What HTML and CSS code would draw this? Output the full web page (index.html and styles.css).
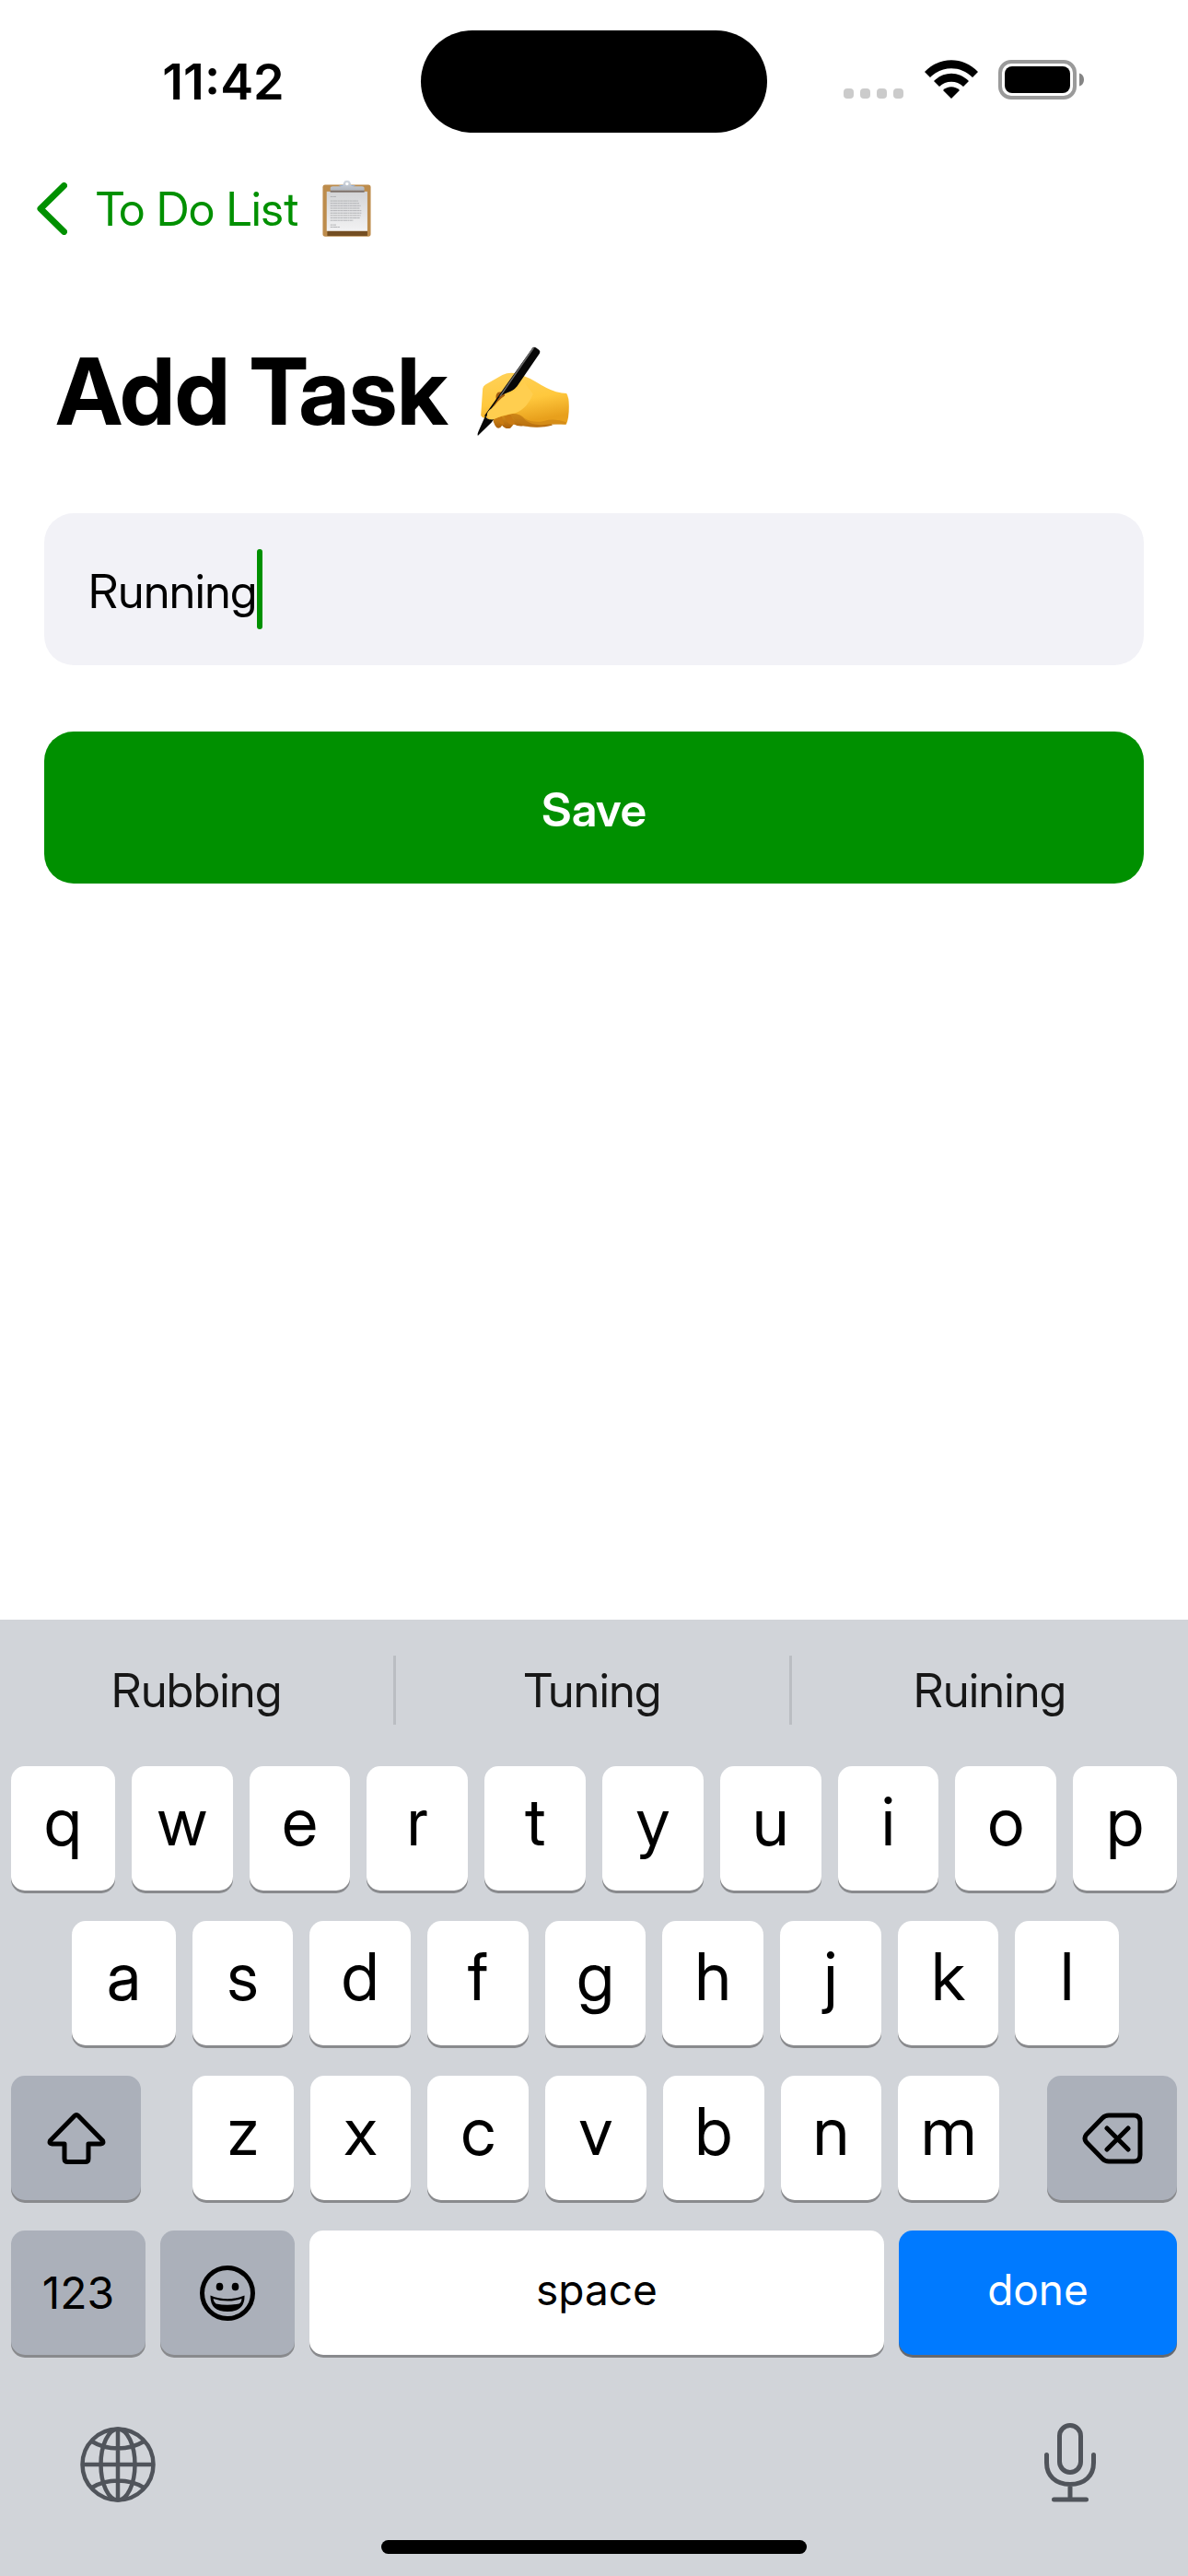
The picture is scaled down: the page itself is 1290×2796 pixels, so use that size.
FILE: index.html
```html
<!DOCTYPE html>
<html lang="en">
<head>
<meta charset="utf-8">
<meta name="viewport" content="width=device-width, initial-scale=1">
<title>Add Task</title>
<link rel="stylesheet" href="styles.css">
</head>
<body>
<div class="screen">
  <header class="status">
    <time class="status-time">11:42</time>
    <div class="island"></div>
    <div class="status-icons">
      <div class="signal"><i></i><i></i><i></i><i></i></div>
      <svg class="wifi" width="58" height="42" viewBox="0 0 58 42" aria-label="Wi-Fi">
        <path d="M0 13C16-4 42-4 58 13L52 19C39 6 19 6 6 19Z"/>
        <path d="M10 23C21 12 37 12 48 23L42 29C35 22 23 22 16 29Z"/>
        <path d="M20 33C25 28 33 28 38 33L29 42Z"/>
      </svg>
      <svg class="battery" width="94" height="43" viewBox="0 0 94 43" aria-label="Battery full">
        <rect x="2" y="2" width="81" height="39" rx="12" fill="none" stroke="#9a9a9a" stroke-width="4"/>
        <rect x="7" y="7" width="71" height="29" rx="8"/>
        <path d="M88 14.500C91.500 15.500 93 18.500 93 21.500S91.500 27.500 88 28.500Z" fill="#858585"/>
      </svg>
    </div>
  </header>

  <nav class="nav">
    <a class="back" href="#">
      <svg width="33" height="57" viewBox="0 0 33 57" aria-hidden="true"><path d="M29.500 3.500L4 28.500L29.500 53.500" fill="none" stroke="currentColor" stroke-width="7" stroke-linecap="round" stroke-linejoin="round"/></svg>
      <span class="back-label">To Do List</span>
      <svg width="53" height="62" viewBox="60 46 160 188" role="img" aria-label="clipboard">
        <defs>
          <linearGradient id="paper" x1="0" y1="0" x2="0" y2="1"><stop offset="0" stop-color="#d3d4d6"/><stop offset="1" stop-color="#f2f2f3"/></linearGradient>
          <linearGradient id="clip" x1="0" y1="0" x2="0" y2="1"><stop offset="0" stop-color="#d5dbe3"/><stop offset="1" stop-color="#aeb4be"/></linearGradient>
        </defs>
        <rect x="61" y="63" width="158" height="170" rx="8" fill="#bd8c4c"/>
        <path d="M76 214H208V231H76Z" fill="#744e22"/>
        <rect x="74" y="85" width="134" height="130" fill="url(#paper)"/>
        <path d="M86 81H198V88H86Z" fill="#7d7069"/>
        <path d="M86 82V75Q86 68 94 68H118Q128 67 130 55Q132 48 141 48T152 55Q154 67 164 68H190Q198 68 198 75V82Z" fill="url(#clip)"/>
        <path d="M112 67Q125 62 129 67ZM170 67Q158 62 153 67Z" fill="#8fb2df"/>
        <circle cx="141" cy="60" r="5" fill="#fff"/>
        <g stroke="#b2b3b6" stroke-width="3" stroke-dasharray="9 1 14 1 6 1">
          <path d="M86 102H105M86 116H178M86 124H181M86 132H186M86 140H183M86 148H188M86 156H188M86 164H186M86 172H184M86 180H161M86 195H105M86 202H118"/>
        </g>
      </svg>
    </a>
  </nav>

  <main class="content">
    <h1 class="title">Add Task
      <svg width="101" height="98" viewBox="118 75 302 294" role="img" aria-label="writing hand">
        <defs>
          <linearGradient id="skin" x1="0" y1="0" x2="0.300" y2="1"><stop offset="0" stop-color="#ffd25a"/><stop offset="0.600" stop-color="#ffc83d"/><stop offset="1" stop-color="#e8a01c"/></linearGradient>
          <linearGradient id="skin-dark" x1="0" y1="0" x2="0" y2="1"><stop offset="0" stop-color="#f0aa22"/><stop offset="1" stop-color="#a95f0c"/></linearGradient>
        </defs>
        <path d="M168 300Q168 325 182 340Q192 345 199 332Q210 346 226 341Q234 335 236 328Q252 337 268 334Q320 343 362 332L345 280L230 275Z" fill="url(#skin-dark)"/>
        <path d="M172 312Q180 300 196 296L206 330Q192 332 190 318ZM206 303L226 296L242 328Q224 334 214 318Z" fill="#c97a12"/>
        <path d="M130 300L136 212Q137 204 146 199L200 168Q228 155 262 168Q290 178 312 192Q345 213 375 223Q395 228 409 228Q417 240 417 270Q417 310 408 329Q360 326 335 330Q300 334 276 316Q258 292 232 294Q196 302 172 312Q158 318 150 308L146 306Q138 312 130 300Z" fill="url(#skin)"/>
        <path d="M218 296Q252 288 272 309Q300 326 336 318Q370 308 408 322L405 329Q372 327 350 334Q300 342 268 334L240 312Z" fill="#c27a14" opacity=".5"/>
        <path d="M186 224Q176 232 180 248L168 278Q184 250 208 236L204 222Z" fill="#a45d10"/>
        <path d="M297 82Q301 75 309 79L320 87Q325 92 321 98L248 205Q236 220 216 226Q200 231 188 243L146 306L142 300Z" fill="#070707"/>
        <path d="M297 82Q301 77 305 79L196 236L188 241Z" fill="#6b6b6b"/>
        <path d="M144 302Q152 316 172 312L164 323L120 366Q118 360 122 352Z" fill="#080808"/>
        <path d="M150 298Q150 286 166 276Q184 262 196 246Q204 236 222 230Q248 221 272 192L300 230Q276 286 232 294Q196 300 172 312Q154 317 150 298Z" fill="#ffce4f"/>
      </svg>
    </h1>
    <form class="form">
      <label class="field">
        <input class="field-input" type="text" name="task" value="Running" aria-label="Task" autocomplete="off">
        <span class="caret"></span>
      </label>
      <button class="save" type="button">Save</button>
    </form>
  </main>

  <section class="keyboard" aria-label="Keyboard">
    <div class="suggestions">
      <button type="button">Rubbing</button>
      <button type="button">Tuning</button>
      <button type="button">Ruining</button>
    </div>
    <div class="rows">
      <div class="row row-wide-ends">
        <button class="key">q</button><button class="key">w</button><button class="key">e</button><button class="key">r</button><button class="key">t</button><button class="key">y</button><button class="key">u</button><button class="key">i</button><button class="key">o</button><button class="key">p</button>
      </div>
      <div class="row row-wide-ends row-home">
        <button class="key">a</button><button class="key">s</button><button class="key">d</button><button class="key">f</button><button class="key">g</button><button class="key">h</button><button class="key">j</button><button class="key">k</button><button class="key">l</button>
      </div>
      <div class="row-shift">
        <button class="key key-dark" aria-label="Shift">
          <svg width="64" height="56" viewBox="0 0 64 56"><path d="M30 3.500Q32 1.500 34 3.500L60.500 30.500Q62 34 58.500 34H45V50Q45 53.500 41.500 53.500H22.500Q19 53.500 19 50V34H5.500Q2 34 3.500 30.500Z" fill="none" stroke="#000" stroke-width="5" stroke-linejoin="round"/></svg>
        </button>
        <div class="row">
          <button class="key">z</button><button class="key">x</button><button class="key">c</button><button class="key">v</button><button class="key">b</button><button class="key">n</button><button class="key">m</button>
        </div>
        <button class="key key-dark" aria-label="Delete">
          <svg width="66" height="56" viewBox="0 0 66 56" fill="none" stroke="#000" stroke-width="5" stroke-linecap="round" stroke-linejoin="round"><path d="M29 3H56Q63 3 63 10V46Q63 53 56 53H29Q25 53 22 50L4.500 32Q1.500 28 4.500 24L22 6Q25 3 29 3ZM27 17L50 40M50 17L27 40"/></svg>
        </button>
      </div>
      <div class="row-bottom">
        <button class="key key-dark key-word key-num">123</button>
        <button class="key key-dark" aria-label="Emoji">
          <svg width="60" height="60" viewBox="0 0 60 60"><circle cx="30" cy="30" r="27.500" fill="none" stroke="#000" stroke-width="5"/><ellipse cx="21.500" cy="23" rx="3.800" ry="4.300"/><ellipse cx="38.500" cy="23" rx="3.800" ry="4.300"/><path d="M11.500 32.500Q30 40 48.500 32.500Q49 50 30 50T11.500 32.500Z"/><path d="M14.500 36Q30 41 45.500 36Q45 40.500 42.500 41.500Q30 44 17.500 41.500Q15 40 14.500 36Z" fill="#abb0ba"/></svg>
        </button>
        <button class="key key-word">space</button>
        <button class="key key-word key-done">done</button>
      </div>
    </div>
    <div class="tools">
      <button type="button" aria-label="Next keyboard">
        <svg width="82" height="82" viewBox="0 0 82 82" fill="none" stroke="currentColor" stroke-width="4.500"><circle cx="41" cy="41" r="38.500"/><ellipse cx="41" cy="41" rx="18.500" ry="38.500"/><path d="M41 2V80M2 41H80M13 16Q25 23.500 41 23.500T69 16M13 66Q25 58.500 41 58.500T69 66"/></svg>
      </button>
      <button type="button" aria-label="Dictate">
        <svg width="56" height="86" viewBox="0 0 56 86" fill="none" stroke="currentColor" stroke-width="5" stroke-linecap="round"><rect x="16.500" y="2.500" width="23" height="51" rx="11.500"/><path d="M2.500 34.500V43C2.500 57 12 66.500 28 66.500S53.500 57 53.500 43V34.500M28 67V83M10.500 83H45.500"/></svg>
      </button>
    </div>
    <div class="home"></div>
  </section>
</div>
</body>
</html>
```
FILE: styles.css
```css
* {
  box-sizing: border-box;
}

body {
  margin: 0;
  background: #fff;
  color: #000;
  font-family: "Inter Display", Inter, "Liberation Sans", sans-serif;
  font-size: 51px;
}

button,
input {
  border: 0;
  margin: 0;
  padding: 0;
  background: none;
  color: inherit;
  font: inherit;
}

svg {
  display: block;
  flex: none;
}

.screen {
  min-height: 100vh;
  display: flex;
  flex-direction: column;
}

/* Status bar */
.status {
  display: grid;
  grid-template-columns: 1fr 376px 1fr;
  align-items: center;
  padding-top: 33px;
}

.status-time {
  padding-left: 28px;
  text-align: center;
  font-family: Inter, "Liberation Sans", sans-serif;
  font-size: 54px;
  font-weight: 600;
}

.island {
  height: 111px;
  border-radius: 56px;
  background: #000;
}

.status-icons {
  display: flex;
  align-items: flex-end;
  padding: 0 112px 4px 0;
  justify-content: flex-end;
}

.signal {
  display: flex;
  gap: 7px;
  margin: 0 23px 1px 0;
}

.signal i {
  width: 11px;
  height: 11px;
  border-radius: 4px;
  background: #cbcbcb;
}

.wifi {
  margin: 0 22px 1px 0;
}

/* Navigation */
.nav {
  display: flex;
  height: 132px;
  margin-top: 16px;
  padding-left: 40px;
}

.back {
  display: flex;
  align-items: center;
  color: #009000;
  text-decoration: none;
}

.back-label {
  margin: 0 26px 0 31px;
}

/* Form */
.content {
  padding: 73px 48px 72px;
}

.title {
  display: flex;
  align-items: center;
  gap: 32px;
  margin: 0 13px 72px;
  font-size: 100px;
  line-height: 120px;
  font-weight: 700;
}

.form {
  display: flex;
  flex-direction: column;
  gap: 72px;
}

.field {
  display: flex;
  align-items: center;
  height: 165px;
  padding: 0 48px;
  border-radius: 32px;
  background: #f2f2f7;
}

.field-input {
  field-sizing: content;
  max-width: 100%;
  padding-top: 4px;
  outline: none;
  caret-color: transparent;
}

.caret {
  width: 6px;
  height: 87px;
  border-radius: 3px;
  background: #009000;
}

.save {
  height: 165px;
  padding-top: 4px;
  border-radius: 32px;
  background: #009000;
  color: #fff;
  font-weight: 600;
}

/* Keyboard */
.keyboard {
  margin-top: auto;
  padding-bottom: 24px;
  background: #d1d4d9;
}

.suggestions {
  display: grid;
  grid-template-columns: repeat(3, 1fr);
  padding: 39px 0 45px;
}

.suggestions button {
  height: 75px;
  border-right: 3px solid #bbbec3;
  color: #171717;
}

.suggestions button:last-child {
  border-right: 0;
}

.rows {
  display: grid;
  gap: 33px;
  padding: 0 12px;
}

.row {
  display: flex;
  gap: 18px;
}

.row-home {
  padding: 0 63px 0 66px;
}

.row-shift {
  display: grid;
  grid-template-columns: 141fr 876fr 141fr;
  gap: 54px;
}

.row-shift .row {
  margin: 0 -2px 0 2px;
}

.row-bottom {
  display: grid;
  grid-template-columns: 146fr 146fr 624fr 302fr;
  gap: 16px;
}

.key {
  display: flex;
  flex: 110 1 0;
  align-items: center;
  justify-content: center;
  height: 135px;
  padding-bottom: 17px;
  border-radius: 15px;
  background: #fff;
  box-shadow: 0 3px 0 #898a8d;
  font-size: 72px;
  font-weight: 400;
}

.row-wide-ends .key:first-child,
.row-wide-ends .key:last-child {
  flex-grow: 113;
}

.key-dark {
  padding-bottom: 0;
  background: #abb0ba;
}

.key-word {
  padding-bottom: 8px;
  font-family: Inter, "Liberation Sans", sans-serif;
  font-size: 46px;
}

.key-num {
  padding-bottom: 0;
  font-size: 48px;
}

.key-done {
  background: #007aff;
  color: #fff;
  box-shadow: 0 3px 0 #66696e;
}

.tools {
  display: flex;
  justify-content: space-between;
  align-items: flex-end;
  padding: 74px 100px 0 87px;
  color: #50545b;
}

.home {
  width: 462px;
  max-width: 60%;
  height: 15px;
  margin: 41px auto 0;
  border-radius: 8px;
  background: #000;
}
```
